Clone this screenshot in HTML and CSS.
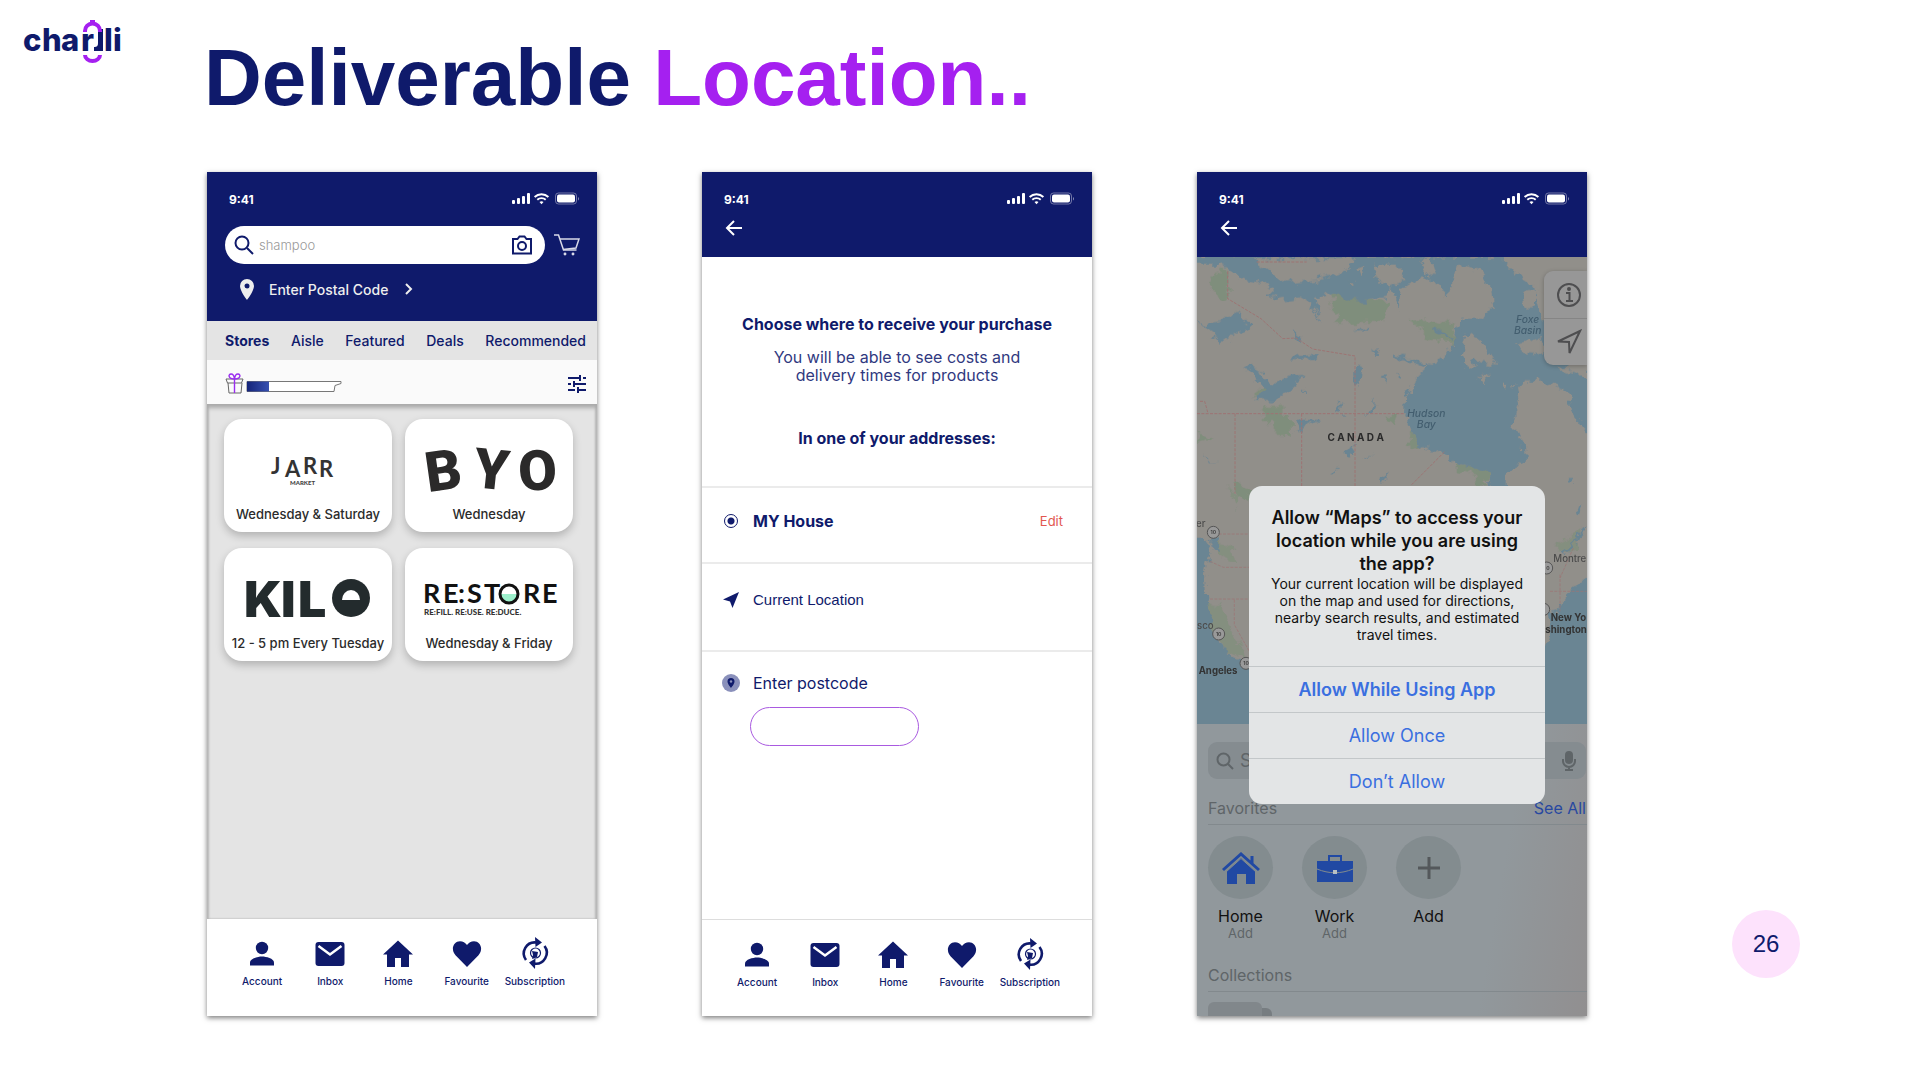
FILE: index.html
```html
<!DOCTYPE html>
<html lang="en">
<head>
<meta charset="utf-8">
<meta name="viewport" content="width=device-width, initial-scale=1">
<title>Deliverable Location</title>
<link rel="stylesheet" href="styles.css">
</head>
<body>
<svg class="defs" aria-hidden="true">
  <symbol id="signals" viewBox="0 0 68 14">
    <g fill="currentColor">
      <rect x="0" y="8" width="3" height="4" rx="1"/><rect x="5" y="6" width="3" height="6" rx="1"/>
      <rect x="10" y="4" width="3" height="8" rx="1"/><rect x="15" y="1" width="3" height="11" rx="1"/>
      <path d="M29.500 12.200l-2-2.100a3 3 0 0 1 4 0z"/>
      <rect x="45" y="2.500" width="18" height="8" rx="2"/>
      <path d="M66 5v3.500c1.300-.6 1.300-2.900 0-3.500z" opacity=".5"/>
    </g>
    <g fill="none" stroke="currentColor">
      <path d="M25.300 7.800a6 6 0 0 1 8.400 0M22.600 5a10 10 0 0 1 13.800 0" stroke-width="1.900"/>
      <rect x="43.500" y="1" width="21" height="11" rx="3" opacity=".4"/>
    </g>
  </symbol>
  <symbol id="back" viewBox="0 0 18 18"><path d="M9 2L2 9l7 7M2 9h15" fill="none" stroke="currentColor" stroke-width="2"/></symbol>
  <symbol id="account" viewBox="0 0 32 32"><circle cx="16" cy="11" r="6.200" fill="currentColor"/><path d="M4 28.500v-3c0-4 8-6 12-6s12 2 12 6v3z" fill="currentColor"/></symbol>
  <symbol id="inbox" viewBox="0 0 32 32"><rect x="1.500" y="5" width="29" height="24" rx="3" fill="currentColor"/><path d="M4.500 9L16 17.500 27.500 9" fill="none" stroke="#fff" stroke-width="2.500"/></symbol>
  <symbol id="home" viewBox="0 0 32 32"><path d="M16 3.500L1 17.500h4V30h8v-9h6v9h8V17.500h4z" fill="currentColor"/></symbol>
  <symbol id="heart" viewBox="0 0 32 32"><path d="M16 30L4.500 18.300C-1 12 3 4.300 9 4.300c3 0 5.300 1.400 7 3.700 1.700-2.300 4-3.700 7-3.700 6 0 10 7.700 4.500 14z" fill="currentColor"/></symbol>
  <symbol id="subscription" viewBox="0 0 32 32">
    <g fill="none" stroke="currentColor" stroke-width="2.600">
      <path d="M7 23A11 11 0 0 1 17 5.500M25.500 9A11 11 0 0 1 15 26.500"/>
      <circle cx="16.500" cy="16" r="5" stroke-width="1.200"/>
    </g>
    <path d="M16 0l7 5.500L16.500 10zM16 32l-6-6.500 6.500-4zM13 14l6 1-1 5-5 2 1-4z" fill="currentColor"/>
  </symbol>
</svg>

<header class="top">
  <svg class="brand" viewBox="0 0 100 46" role="img" aria-label="charjli">
    <g class="brand-text"><text x="-1" y="33">c</text><text x="18" y="33">h</text><text x="37" y="33">a</text><text x="57" y="33">r</text><text x="80" y="33">l</text><text x="89" y="33">i</text></g>
    <path d="M70 33v-4c3 0 4-1 4-4V11h5v22z" fill="#0f1a6b"/>
    <path d="M61 14v-1a7.500 7.500 0 0 1 15 0v1M61 37a7.500 6 0 0 0 15 0" fill="none" stroke="#a520f0" stroke-width="4"/>
    <path d="M66 2h5v5h-5z" fill="#a520f0"/>
  </svg>
  <h1>Deliverable <span>Location..</span></h1>
</header>

<main class="deck">
  <section class="phone" aria-label="Stores">
    <div class="bar bar-search">
      <div class="status"><span>9:41</span><svg><use href="#signals"/></svg></div>
      <div class="search-row">
        <label class="search">
          <svg viewBox="0 0 20 20"><circle cx="8" cy="8" r="6.500"/><path d="M13 13l6 6"/></svg>
          <input type="search" placeholder="shampoo" aria-label="Search products">
          <svg class="camera" viewBox="0 0 22 20"><path d="M2 4h4.500l2-2.500h5l2 2.500H20v14.500H2z"/><circle cx="11" cy="11" r="4"/></svg>
        </label>
        <button class="cart" aria-label="Cart"><svg viewBox="0 0 26 24"><path d="M0 2h4.500l5 15h13"/><path d="M6 6h19l-3 9-13 1.500"/><circle cx="11" cy="21" r=".7"/><circle cx="19" cy="21" r=".7"/></svg></button>
      </div>
      <a class="postal" href="#postcode">
        <svg class="pin" viewBox="0 0 14 21"><path fill-rule="evenodd" d="M7 0a7 7 0 0 0-7 7c0 5 7 14 7 14s7-9 7-14a7 7 0 0 0-7-7zm0 4.500a2.500 2.500 0 1 1 0 5 2.500 2.500 0 0 1 0-5z"/></svg>
        <span>Enter Postal Code</span>
        <svg class="chev" viewBox="0 0 8 12"><path d="M1 1l5 5-5 5"/></svg>
      </a>
    </div>
    <nav class="tabs" aria-label="Sections"><a class="on" href="#s">Stores</a><a href="#a">Aisle</a><a href="#f">Featured</a><a href="#d">Deals</a><a href="#r">Recommended</a></nav>
    <div class="rewards">
      <svg class="gift" viewBox="0 0 118 22">
        <g fill="none" stroke="#666" stroke-width="1"><path d="M1 6h17l-1.500 4h-14zM3 10l1 10h12l1-10"/></g>
        <g fill="none" stroke="#9a2cf0" stroke-width="1.400"><path d="M9.500 6v14M9.500 6C3 6 3 1 6 1s3.500 5 3.500 5 .5-5 3.500-5 3 5-3.500 5"/></g>
        <path d="M22 8.500h94v2l-6 2-1 6H22z" fill="#fff" stroke="#777"/>
        <path d="M22 8.500h22v10H22z" fill="url(#fill)"/>
        <linearGradient id="fill"><stop stop-color="#15247a"/><stop offset="1" stop-color="#3650b0"/></linearGradient>
      </svg>
      <button class="filter" aria-label="Filter"><svg viewBox="0 0 20 20"><path d="M1 4h11M16 4h3M1 10h3M8 10h11M1 16h7M12 16h7M13 1v6M7 7v6M11 13v6" fill="none" stroke="currentColor" stroke-width="2"/></svg></button>
    </div>
    <div class="stores">
      <a class="card" href="#jarr">
        <svg viewBox="0 0 168 86" aria-hidden="true"><g class="jarr"><text x="47" y="55">J</text><text x="61" y="58">A</text><text x="79" y="55">R</text><text x="95" y="58">R</text></g><text class="market" x="66" y="66">MARKET</text></svg>
        <span>Wednesday &amp; Saturday</span>
      </a>
      <a class="card" href="#byo">
        <svg viewBox="0 0 168 86" aria-hidden="true"><g class="byo"><text x="20" y="71" transform="rotate(-8 38 50)">B</text><text x="69" y="70" transform="rotate(6 87 50)">Y</text><text x="113" y="71" transform="rotate(-3 133 50)">O</text></g></svg>
        <span>Wednesday</span>
      </a>
      <a class="card" href="#kilo">
        <svg viewBox="0 0 168 86" aria-hidden="true"><g class="kilo"><text x="20" y="69">K</text><text x="57" y="69">I</text><text x="74" y="69">L</text></g><circle cx="127" cy="50" r="19" fill="#232b2d"/><path d="M118 52a9 10 0 0 1 18 0z" fill="#fff"/></svg>
        <span>12 - 5 pm Every Tuesday</span>
      </a>
      <a class="card" href="#restore">
        <svg viewBox="0 0 168 86" aria-hidden="true"><path d="M95 46a9 9 0 0 0 18 0z" fill="#9df0cc"/><g class="restore"><text x="18" y="55">R</text><text x="38" y="55">E</text><text x="53" y="55">:</text><text x="62" y="55">S</text><text x="79" y="55">T</text><text x="118" y="55">R</text><text x="137" y="55">E</text></g><circle cx="104" cy="46" r="9" fill="none" stroke="#111" stroke-width="3"/><text class="refill" x="19" y="67">RE:FILL. RE:USE. RE:DUCE.</text></svg>
        <span>Wednesday &amp; Friday</span>
      </a>
    </div>
    <nav class="dock" aria-label="Main">
      <a href="#account"><svg><use href="#account"/></svg>Account</a><a href="#inbox"><svg><use href="#inbox"/></svg>Inbox</a><a href="#home"><svg><use href="#home"/></svg>Home</a><a href="#fav"><svg><use href="#heart"/></svg>Favourite</a><a href="#sub"><svg><use href="#subscription"/></svg>Subscription</a>
    </nav>
  </section>

  <section class="phone" aria-label="Choose address">
    <div class="bar">
      <div class="status"><span>9:41</span><svg><use href="#signals"/></svg></div>
      <button class="back" aria-label="Back"><svg><use href="#back"/></svg></button>
    </div>
    <form class="address">
      <div class="intro">
        <h2>Choose where to receive your purchase</h2>
        <p>You will be able to see costs and<br>delivery times for products</p>
        <h2>In one of your addresses:</h2>
      </div>
      <div class="option house"><input type="radio" id="house" name="where" checked><label for="house">MY House</label><a href="#edit">Edit</a></div>
      <div class="option current"><svg viewBox="0 0 18 18"><path d="M17 1L1 8.500l7 2L10.500 17z" fill="currentColor"/></svg><button type="button">Current Location</button></div>
      <div class="option post"><svg viewBox="0 0 18 18"><circle cx="9" cy="9" r="9" fill="#8a90bb"/><path d="M9 4a3.500 3.500 0 0 0-3.500 3.500C5.500 10 9 14 9 14s3.500-4 3.500-6.500A3.500 3.500 0 0 0 9 4z" fill="currentColor"/><circle cx="9" cy="7.500" r="1.200" fill="#8a90bb"/></svg><label for="postcode">Enter postcode</label><input type="text" id="postcode"></div>
    </form>
    <nav class="dock lined" aria-label="Main">
      <a href="#account"><svg><use href="#account"/></svg>Account</a><a href="#inbox"><svg><use href="#inbox"/></svg>Inbox</a><a href="#home"><svg><use href="#home"/></svg>Home</a><a href="#fav"><svg><use href="#heart"/></svg>Favourite</a><a href="#sub"><svg><use href="#subscription"/></svg>Subscription</a>
    </nav>
  </section>

  <section class="phone" aria-label="Location permission">
    <div class="bar">
      <div class="status"><span>9:41</span><svg><use href="#signals"/></svg></div>
      <button class="back" aria-label="Back"><svg><use href="#back"/></svg></button>
    </div>
    <div class="maps">
      <svg class="map" viewBox="21 277 1170 1401" preserveAspectRatio="xMidYMid slice" aria-hidden="true">
        <defs><filter id="coast" x="0" y="0" width="100%" height="100%"><feTurbulence type="fractalNoise" baseFrequency=".035" numOctaves="3" seed="4"/><feDisplacementMap in="SourceGraphic" scale="40" xChannelSelector="R" yChannelSelector="G"/></filter></defs>
        <rect x="21" y="277" width="1170" height="1401" fill="#918f8a"/>
        <g filter="url(#coast)">
          <g fill="#7f8e7b">
            <path d="M75 315l40 5v85l-20 8-35-55zM427 378l60 25 70 5 36 5-12 62H440v-28l-12-12zM660 468l60-4 75 14 3 57-80-3-20-35zM222 727h55v20h28v70h-50v-45h-30zM190 690l30-25 15 20-20 12zM665 800l25 48-30-2zM800 895l90 25v45h-25l-10-35-55-8zM25 800l40 25-45 10zM580 760l40-5-10 25zM135 950l45 35v25l-45-30z"/>
            <path d="M70 1130l50 15 20 50-50-20zM50 1310l40 10 40 90 40 70-60-20-55-90zM110 970l40 20-10 40zM1090 1150l90-60-30 70z" opacity=".7"/>
          </g>
          <g fill="#6b8593">
            <path d="M0 270V300H90l40 22 30 23 60 10 30 17-20 20 40 13 60-7 30 17 25 35-10-50 50-15 45 20 60 3 60-13 10-25 20 50 5 20 7-70 58-20 40-10 20 30 20 30 20-60 10-40 60 10 45 70 5 50-40 35h-60l-20 65-30 45-35 25-45 40-30 50-7 60 22 50 25 50 60 10 40 30 100 35 7 40h53v-35l55-40-5-60-30-40 15-70-10-65 85-5 75 30 10 60 56 75V620l-100-50-50-120-30-110-70-60z"/>
            <path d="M30 480l60-10 60-30 30 40-50 30-40 30-15-25zM160 600l55 20 30 40 55-25 50-5-40 35-60 45-55-5 30-25zM300 490l40 28-10 8zM360 410l30 60-10-10zM310 575l80-5-10 15-80 5zM495 610l25-8-10 50-12 10zM545 560l25-3-8 15zM575 635l12-4v22zM620 620l8 20-8 2zM330 765l55 0-30 15-38 20zM615 570l110 30-20 5-90-25zM440 740l20-30-5 35zM538 750l10-38 8 2-8 36zM465 870l30-40-10 40-12 10zM520 880l30-12-22 14zM40 870l20 22 30-5-35 8zM430 920l14-6-6 12zM565 940l30-18-20 35zM1130 940l28 0-10 20zM340 675l8 8-5 4zM585 680l12 20zM500 495l42-8-10 12zM730 490l60 30-8 5-52-25zM810 460l20 60 40 0-38-45z"/>
            <path d="M0 1125h50l10 30-12 65 2 70 15 80 20 60 45 50 48 20 32 60 300 140H0zM55 1125l30-5 5 40-15-5zM1210 1225l-80 65-20 40-35 15v55l-15 60-160 240h310zM1120 1165l71-80v10l-65 75zM1150 1030l25-10-10 30z"/>
          </g>
          <path fill="#918f8a" d="M190 280h300l-20 40-90 25-90 8-50-33zM550 300l70 0 30 40-50 28-40-23zM930 270h280v160l-110-10-60-50-60-40zM1000 380l35-2v47h-30zM980 540l80-20v50l-60-5zM830 510l40 10 30 50 20 30-60-10-30 25-15-50zM865 635l35-7-20 28zM940 655l14 5-8 22zM690 285l25 55 15-30-10-35zM500 310l30-5-20 30zM470 350l25 5-12 10zM1090 610l101 30v-50z"/>
        </g>
        <g fill="none" stroke="#9d7473" stroke-width="3" stroke-dasharray="9 4">
          <path d="M113 320v82l100 60 65 60 40-2 50 33 127 21v391M21 747h620M135 747v240M335 747v240M30 710h14l10 36M665 960l98-98M200 292h150"/>
          <path d="M60 1108h118M60 1190l40 18h78M60 1303h118M133 1305v75l45 80M1080 1280l110 0M1110 1230v110M1150 1150l-40 90" opacity=".7"/>
        </g>
        <g class="shields"><g><circle cx="70" cy="1103" r="18"/><circle cx="86" cy="1408" r="18"/><circle cx="168" cy="1496" r="18"/><circle cx="1070" cy="1210" r="18"/><circle cx="1061" cy="1334" r="18"/></g><text x="70" y="1109">10</text><text x="86" y="1414">10</text><text x="168" y="1502">10</text><text x="1074" y="1216">0</text></g>
        <g class="sea"><text x="1013" y="474">Foxe</text><text x="1013" y="508">Basin</text><text x="709" y="756">Hudson</text><text x="709" y="790">Bay</text></g>
        <text class="country" x="497" y="828">C A N A D A</text>
        <g class="city"><text x="18" y="1088">er</text><text x="21" y="1393">sco</text><text x="26" y="1527" class="major">Angeles</text><text x="1090" y="1193">Montre</text><text x="1082" y="1369" class="major">New Yo</text><text x="1066" y="1406" class="major">shington</text></g>
      </svg>
      <div class="controls">
        <button aria-label="Info"><svg viewBox="0 0 26 26"><circle cx="13" cy="13" r="11"/><path d="M10 11h3.500v8M10 19h7"/><circle cx="13" cy="7" r="1"/></svg></button>
        <button aria-label="Locate me"><svg viewBox="0 0 26 26"><path d="M24 2L2 12.500l11 .5.5 11z"/></svg></button>
      </div>
      <div class="sheet">
        <label class="find"><svg viewBox="0 0 18 18"><circle cx="7.500" cy="7.500" r="6"/><path d="M12 12l5 5"/></svg><input type="search" placeholder="Search" aria-label="Search maps"><svg class="mic" viewBox="0 0 14 20"><rect x="4" y="1" width="6" height="11" rx="3" fill="currentColor"/><path d="M1 8v2a6 6 0 0 0 12 0V8M7 16v3M3 19h8"/></svg></label>
        <div class="head"><span>Favorites</span><a href="#all">See All</a></div>
        <div class="favs">
          <button><i><svg viewBox="0 0 38 32"><path d="M5 19L19 6l14 13v13h-9V22h-9v10H5z" fill="currentColor"/><path d="M1 18L19 2l18 16M30 4v8" fill="none" stroke="currentColor" stroke-width="3"/><path d="M4 20L19 6.500 34 20" fill="none" stroke="#838c8f"/></svg></i><b>Home</b><small>Add</small></button>
          <button><i><svg viewBox="0 0 38 32"><path d="M1 9h36v21H1z" fill="currentColor"/><path d="M13 9V4h12v5" fill="none" stroke="currentColor" stroke-width="2"/><path d="M1 17c12 5 24 5 36 0" fill="none" stroke="#828b8e"/><path d="M17 18h4v4h-4z" fill="#b9c0c4"/></svg></i><b>Work</b><small>Add</small></button>
          <button><i><svg class="plus" viewBox="0 0 38 32"><path d="M19 5v22M8 16h22" stroke="currentColor" stroke-width="3"/></svg></i><b>Add</b></button>
        </div>
        <div class="head"><span>Collections</span></div>
        <div class="stack"></div>
      </div>
      <div class="dialog" role="alertdialog" aria-labelledby="ask">
        <h2 id="ask">Allow “Maps” to access your<br>location while you are using<br>the app?</h2>
        <p>Your current location will be displayed<br>on the map and used for directions,<br>nearby search results, and estimated<br>travel times.</p>
        <button class="primary">Allow While Using App</button>
        <button>Allow Once</button>
        <button>Don’t Allow</button>
      </div>
    </div>
  </section>
  <div class="page">26</div>
</main>
</body>
</html>
```
FILE: styles.css
```css
* { box-sizing: border-box; }
:root { --navy: #0f1a6b; --line: #ebebeb; }
body { margin: 0; background: #fff; color: var(--navy); font-family: Inter, "Liberation Sans", sans-serif; }
a { color: inherit; text-decoration: none; }
button { border: 0; padding: 0; background: none; color: inherit; font: inherit; }
input { font: inherit; color: inherit; }
h1, h2, p { margin: 0; }
svg { display: block; }
.defs { position: absolute; width: 0; height: 0; }

.top { display: flex; align-items: flex-start; gap: 80px; padding: 18px 24px 0; height: 172px; }
.brand { width: 100px; height: 46px; flex: none; overflow: visible; }
.brand-text { font: 800 31px Inter, sans-serif; fill: var(--navy); }
h1 { padding-top: 14px; font: 700 80px/92px "Liberation Sans", Arial, sans-serif; color: var(--navy); }
h1 span { color: #a520f0; }

.deck { display: flex; gap: 105px; padding: 0 24px 64px 207px; }
.phone { flex: 0 1 390px; min-width: 0; min-height: 844px; display: flex; flex-direction: column; background: #fff; box-shadow: 0 2px 5px rgba(0, 0, 0, .5); }
.bar { background: var(--navy); color: #fff; padding: 19px 0 20px; }
.status { display: flex; align-items: center; justify-content: space-between; height: 16px; padding: 0 17px 0 22px; font-size: 12px; font-weight: 700; }
.status svg { width: 68px; height: 14px; }
.back { display: block; margin: 12px 0 0 23px; }
.back svg { width: 18px; height: 18px; }

.bar-search { padding-bottom: 21px; }
.search-row { display: flex; align-items: center; gap: 9px; margin-top: 19px; padding: 0 17px 0 18px; }
.search { flex: 1; min-width: 0; display: flex; align-items: center; height: 38px; padding: 0 12px 0 9px; border-radius: 19px; background: #fff; color: var(--navy); }
.search svg { width: 20px; height: 20px; fill: none; stroke: currentColor; stroke-width: 2; }
.search .camera { width: 22px; }
.search input { flex: 1; min-width: 0; border: 0; padding: 0 5px; background: none; font-size: 13px; outline: 0; }
.search input::placeholder { color: #999; opacity: 1; font-weight: 300; }
.cart svg { width: 26px; height: 24px; fill: none; stroke: #d8d9e8; stroke-width: 1.500; }
.postal { display: flex; align-items: center; height: 22px; margin-top: 14px; padding-left: 33px; gap: 15px; font-size: 14px; font-weight: 500; color: #eee; }
.pin { width: 14px; height: 21px; fill: #eee; }
.chev { width: 8px; height: 12px; margin-left: 2px; fill: none; stroke: #eee; stroke-width: 2; }

.tabs { display: flex; align-items: center; justify-content: space-between; height: 39px; padding: 0 11px 0 18px; background: #e4e4e4; font-size: 14px; font-weight: 500; }
.tabs .on { font-weight: 700; }
.rewards { display: flex; align-items: center; justify-content: space-between; height: 44px; padding: 3px 10px 0 18px; background: #fafafa; }
.gift { width: 118px; height: 22px; }
.filter svg { width: 20px; height: 20px; }
.stores { flex: 1; display: grid; grid-template-columns: 1fr 1fr; align-content: start; gap: 16px 13px; padding: 15px 24px 16px 17px; background: #e4e4e4; box-shadow: inset 0 5px 4px -1px #aaa, inset 2px 0 2px #bbb, inset -2px 0 2px #bbb; }
.card { display: flex; flex-direction: column; height: 113px; border-radius: 18px; background: #fff; box-shadow: 0 4px 8px rgba(0, 0, 0, .22); color: #2b2b2b; font-size: 13px; line-height: 18px; font-weight: 500; text-align: center; white-space: nowrap; }
.card svg { width: 100%; height: 86px; }
.jarr { font: 700 22px Lato, sans-serif; fill: #333; }
.market { font: 900 6px Lato, sans-serif; fill: #444; }
.byo { font: 900 56px Roboto, sans-serif; fill: #2b2a2a; }
.kilo { font: 900 50px Inter, sans-serif; fill: #232b2d; }
.restore { font: 700 27px Lato, sans-serif; fill: #111; }
.refill { font: 900 8px Lato, sans-serif; fill: #333; }

.dock { display: grid; grid-template-columns: repeat(5, 1fr); height: 97px; padding: 18px 28px 0 21px; background: #fff; font-size: 10px; line-height: 14px; font-weight: 500; }
.dock a { display: flex; flex-direction: column; align-items: center; gap: 5px; }
.dock svg { width: 32px; height: 32px; }
.lined { border-top: 1px solid #ddd; }

.address { flex: 1; }
.intro { padding: 57px 0 38px; text-align: center; }
h2 { font-size: 16px; line-height: 20px; font-weight: 700; }
.intro p { margin: 14px 0 44px; font-size: 16px; line-height: 18px; color: #30397f; }
.option { display: grid; grid-template-columns: 18px 1fr auto; column-gap: 13px; align-items: center; padding: 22px 29px 32px 20px; border-top: 2px solid var(--line); font-size: 16px; line-height: 20px; }
.option > svg { width: 18px; height: 18px; }
.house { padding-top: 23px; padding-bottom: 31px; font-weight: 700; }
.house input { appearance: none; width: 14px; height: 14px; margin: 0 2px; border: 1px solid var(--navy); border-radius: 50%; background: radial-gradient(circle, var(--navy) 0 3px, #fff 4px); }
.house a { color: #e2574f; font-size: 13px; font-weight: 400; }
.current { padding-top: 26px; padding-bottom: 40px; }
.current button { justify-self: start; font: 15px/20px "Liberation Sans", Arial, sans-serif; }
.post { padding-top: 21px; }
.post input { grid-column: 1 / -1; width: 169px; height: 39px; margin: 14px 0 0 28px; padding: 0 18px; border: 1px solid #a95ae0; border-radius: 20px; background: #fff; }

.maps { position: relative; flex: 1; overflow: hidden; display: flex; flex-direction: column; color: #5f6568; background: #91989c; }
.map { width: 100%; height: 467px; }
.sea { font: italic 500 31px Inter, sans-serif; fill: #435e6f; text-anchor: middle; }
.country { font: 700 30px Inter, sans-serif; fill: #2a2a2a; text-anchor: middle; }
.city { font: 500 29px Inter, sans-serif; fill: #4c4c4c; }
.city .major { font-weight: 700; fill: #333; }
.shields { font: 700 15px Inter, sans-serif; fill: #444; text-anchor: middle; }
.shields circle { fill: #999; stroke: #555; stroke-width: 3; }
.controls { position: absolute; top: 14px; right: 0; width: 43px; border-radius: 9px 0 0 9px; background: #979797; box-shadow: 0 1px 4px rgba(0, 0, 0, .25); }
.controls button { display: flex; align-items: center; justify-content: center; width: 43px; height: 47px; padding-left: 6px; }
.controls button + button { border-top: 1px solid #858585; }
.controls svg { width: 26px; height: 26px; fill: none; stroke: #4e4e50; stroke-width: 2; }
.sheet { flex: 1; display: flex; flex-direction: column; padding: 18px 0 0 11px; background: linear-gradient(100deg, #91989c 75%, #918f90); }
.find { display: flex; align-items: center; height: 37px; margin-right: 1px; padding: 0 10px 0 8px; border-radius: 9px; background: #858c90; }
.find svg { width: 18px; height: 18px; fill: none; stroke: currentColor; stroke-width: 2; }
.find .mic { width: 14px; height: 20px; }
.find input { flex: 1; min-width: 0; border: 0; padding: 0 6px; background: none; outline: 0; font-size: 18px; }
.find input::placeholder { color: #5f6568; opacity: 1; }
.head { display: flex; justify-content: space-between; margin-top: 19px; padding: 0 1px 6px 0; border-bottom: 1px solid #82898d; font-size: 16px; line-height: 20px; }
.head a { color: #2848a0; }
.favs { display: flex; gap: 29px; padding-top: 11px; }
.favs button { display: flex; flex-direction: column; align-items: center; width: 65px; height: 106px; font-size: 16px; line-height: 18px; }
.favs i { display: flex; align-items: center; justify-content: center; width: 65px; height: 63px; margin-bottom: 8px; border-radius: 50%; background: #838c8f; color: #2149a3; }
.favs svg { width: 38px; height: 32px; }
.favs .plus { color: #54585b; }
.favs b { font-weight: 400; color: #111; }
.favs small { font-size: 13px; line-height: 16px; }
.favs + .head { margin-top: 23px; }
.stack { width: 54px; height: 14px; margin-top: 10px; border-radius: 6px 6px 0 0; background: #81878b; box-shadow: 10px 6px 0 #777d81; }

.dialog { position: absolute; top: 229px; left: 50%; width: 296px; margin-left: -143px; padding-top: 20px; border-radius: 13px; background: #e3e5e6; color: #111; text-align: center; white-space: nowrap; }
.dialog h2 { font-size: 18px; line-height: 23px; font-weight: 600; }
.dialog p { margin-bottom: 23px; font-size: 14px; line-height: 17px; }
.dialog button { display: block; width: 100%; height: 46px; border-top: 1px solid #c3c7c9; color: #3a6fe0; font-size: 18px; }
.dialog .primary { font-weight: 600; }

.page { flex: none; align-self: flex-end; width: 68px; height: 68px; margin: 0 0 38px 40px; border-radius: 50%; background: #fde2fc; font: 24px/68px "Liberation Sans", Arial, sans-serif; text-align: center; }

@media (max-width: 1400px) {
  .deck { flex-wrap: wrap; gap: 40px; padding-left: 24px; }
}
```
